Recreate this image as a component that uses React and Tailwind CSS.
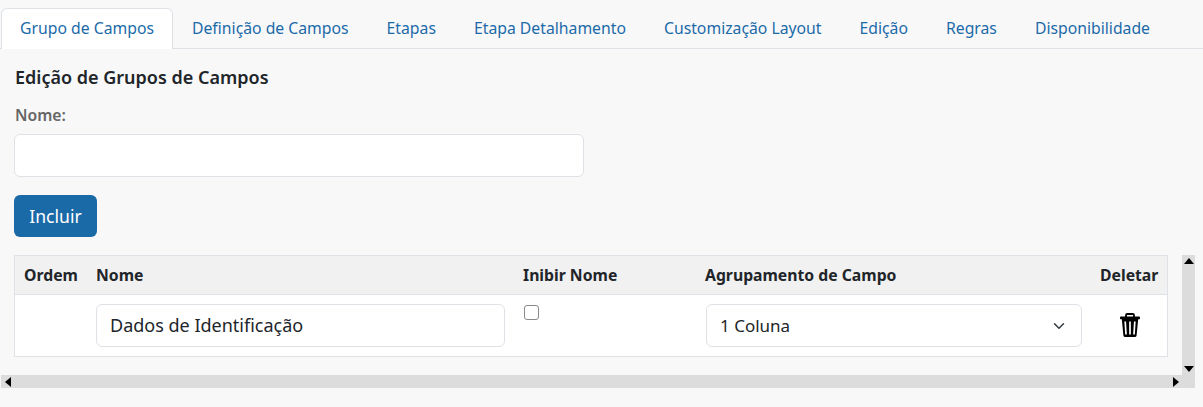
import React from "react";
import { ChevronDown } from "lucide-react";

const tabs = [
  "Grupo de Campos",
  "Definição de Campos",
  "Etapas",
  "Etapa Detalhamento",
  "Customização Layout",
  "Edição",
  "Regras",
  "Disponibilidade",
];

function Arrow({ dir }) {
  const points = {
    up: "1,9 11,9 6,3",
    down: "1,3 11,3 6,9",
    left: "9,1 9,11 3,6",
    right: "3,1 3,11 9,6",
  };
  return (
    <svg width="12" height="12" viewBox="0 0 12 12" className="shrink-0">
      <polygon points={points[dir]} fill="#000" />
    </svg>
  );
}

function TrashIcon() {
  return (
    <svg width="20" height="24" viewBox="0 0 20 24" className="block">
      <path d="M6 4.5V2.2Q6 1 7.2 1H12.8Q14 1 14 2.2V4.5" fill="none" stroke="#000" strokeWidth="1.8" />
      <rect x="0" y="3.6" width="20" height="2.6" rx="0.8" fill="#000" />
      <path d="M1.8 6L3.4 22.6Q3.5 24 4.9 24H15.1Q16.5 24 16.6 22.6L18.2 6Z" fill="#000" />
      <path d="M5.2 8.5L6 21.5M10 8.5V21.5M14.8 8.5L14 21.5" stroke="#fff" strokeWidth="1.7" fill="none" />
    </svg>
  );
}

export default function App() {
  return (
    <div className="w-[1203px] h-[407px] overflow-hidden bg-[#f8f8f9] text-[15.75px] text-[#212529] font-['Noto_Sans',sans-serif]">
      {/* Tabs */}
      <nav className="flex pt-2 pl-px h-[49px] border-b border-[#dee2e6]">
        {tabs.map((t, i) => (
          <div
            key={t}
            className={
              i === 0
                ? "h-[41px] px-[18px] flex items-center text-[#1b6aa8] bg-white border border-b-0 border-[#dee2e6] rounded-t-md"
                : "h-[41px] px-[18px] flex items-center text-[#1b6aa8] border border-transparent"
            }
          >
            {t}
          </div>
        ))}
      </nav>

      <div className="pl-[14px] pt-[16px]">
        <h2 className="text-[18px] leading-6 font-semibold pl-px">Edição de Grupos de Campos</h2>
        <div className="mt-[15px] text-[15.75px] leading-[22px] font-semibold text-[#666666] pl-px">Nome:</div>
        <div className="mt-[8px] w-[570px] h-[43px] bg-white border border-[#dee2e6] rounded-md" />
        <button className="mt-[18px] block w-[83px] h-[42px] bg-[#1b6aa8] text-white rounded-md text-[17.6px]">
          Incluir
        </button>

        {/* Table + scrollbars */}
        <div className="mt-[18px] w-[1194px] flex ml-[-13px]">
          <div className="flex-1 min-w-0">
            <div className="pl-[13px] h-[120px]">
              <div className="w-[1154px] border border-[#dee2e6] bg-white">
                <div className="flex h-[39px] pt-[2px] items-center bg-[#f1f1f2] border-b border-[#dee2e6] font-bold">
                  <div className="w-[81px] pl-[9px]">Ordem</div>
                  <div className="w-[427px]">Nome</div>
                  <div className="w-[182px]">Inibir Nome</div>
                  <div className="w-[395px]">Agrupamento de Campo</div>
                  <div>Deletar</div>
                </div>
                <div className="flex h-[61px] items-start">
                  <div className="w-[81px]" />
                  <div className="w-[427px] pt-[9px]">
                    <div className="w-[409px] h-[43px] flex items-center px-[13px] text-[18px] bg-white border border-[#dee2e6] rounded-md">
                      Dados de Identificação
                    </div>
                  </div>
                  <div className="w-[183px] pt-[10px] pl-px">
                    <div className="w-[15px] h-[15px] bg-white border border-[#8a8a8a] rounded-[3px]" />
                  </div>
                  <div className="w-[395px] pt-[9px]">
                    <div className="w-[376px] h-[43px] flex items-center justify-between pl-[13px] pr-[13px] text-[17px] bg-white border border-[#dee2e6] rounded-md">
                      1 Coluna
                      <ChevronDown size={18} strokeWidth={2} className="text-[#343a40]" />
                    </div>
                  </div>
                  <div className="pl-[19px] pt-[18px]">
                    <TrashIcon />
                  </div>
                </div>
              </div>
            </div>
            <div className="h-[13px] bg-[#dcdcdc] flex items-center justify-between pl-px">
              <Arrow dir="left" />
              <Arrow dir="right" />
            </div>
          </div>
          <div className="w-[13px] h-[133px] bg-[#dcdcdc] flex flex-col">
            <div className="h-[120px] flex flex-col items-center justify-between">
              <Arrow dir="up" />
              <Arrow dir="down" />
            </div>
          </div>
        </div>
      </div>
    </div>
  );
}
